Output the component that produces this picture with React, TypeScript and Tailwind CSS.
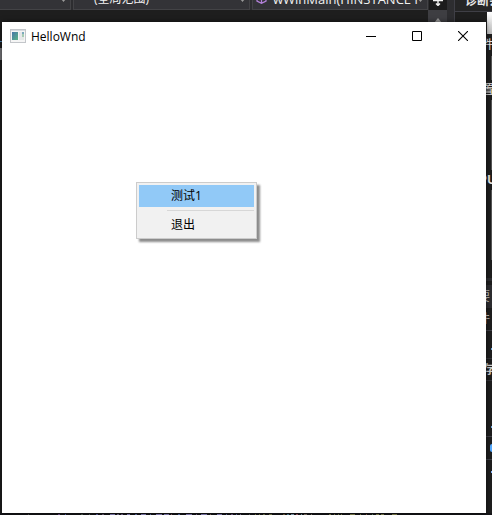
import React from "react";

const uiFont = "font-['Open_Sans','Noto_Sans_CJK_SC',sans-serif]";

// Tops of the code glyphs that peek out under the window: [gap before, width, colour]
const codeSpecks: [number, number, string][] = [
  [28, 1, "#4a4a4a"], [29, 2, "#6c4a86"], [5, 1, "#4a5aa8"], [15, 2, "#4b5a4b"],
  [6, 1, "#55605a"], [6, 2, "#5a5c9c"], [4, 2, "#6c5a72"], [6, 5, "#8c84bd"],
  [2, 2, "#77708f"], [2, 2, "#73618c"], [4, 3, "#8c84bd"], [5, 2, "#5a6aa0"],
  [4, 5, "#8c84bd"], [4, 1, "#5a6aa0"], [5, 6, "#8c84bd"], [2, 5, "#8c84bd"],
  [2, 1, "#8f5f65"], [6, 2, "#566aa4"], [6, 6, "#8c84bd"], [4, 1, "#765b89"],
  [4, 6, "#8c84bd"], [3, 1, "#795b55"], [6, 5, "#8c84bd"], [4, 1, "#5b6ba5"],
  [4, 2, "#765b89"], [3, 1, "#566aa4"], [3, 1, "#7a6f8f"], [8, 1, "#5a5a5a"],
  [5, 1, "#777a45"], [3, 1, "#777a45"], [3, 2, "#70764b"], [4, 3, "#7c7c4d"],
  [11, 2, "#77633f"], [2, 2, "#4f8296"], [2, 3, "#8daac0"], [2, 2, "#a45c67"],
  [3, 1, "#79a0b2"], [2, 3, "#83766a"], [4, 1, "#83766a"], [17, 2, "#7c7c4d"],
  [3, 1, "#7c7c4d"], [3, 1, "#6f7d4b"], [2, 1, "#7c7c4d"], [8, 5, "#858650"],
  [5, 1, "#7c7c4d"], [5, 1, "#8a5d45"], [5, 1, "#5c8660"], [3, 3, "#858650"],
  [2, 3, "#858650"], [8, 5, "#858650"],
];

function EditorBar() {
  const field = "flex h-[10px] items-end overflow-hidden border border-t-0 border-[#434346] bg-[#333337]";
  return (
    <header className="flex h-[10px] min-w-0 shrink-0 overflow-hidden bg-[#2d2d30] text-[12px] leading-5 text-[#f1f1f1]">
      <div className={`${field} w-[71px] shrink-0 justify-end border-l-0`}>
        <Caret />
      </div>
      <div className={`${field} ml-0.5 w-[177px] shrink-0 justify-between pl-5`}>
        <span>(全局范围)</span>
        <Caret />
      </div>
      <div className={`${field} ml-0.5 min-w-0 flex-1`}>
        <svg className="ml-[3px] mb-[5px] h-[11px] w-[11px] shrink-0" viewBox="0 0 11 11" fill="none" stroke="#b180d7" strokeWidth="1.3">
          <path d="M5.5 1 10 3v5l-4.500 2.300L1 8V3zM1 3l4.500 2.500L10 3M5.500 5.500v5" />
        </svg>
        <span className="ml-1.5 min-w-0 flex-1 overflow-hidden whitespace-nowrap text-[13px]">wWinMain(HINSTANCE hInstance)</span>
        <Caret />
      </div>
      <div className="ml-px flex w-[18px] shrink-0 items-end justify-center bg-[#1b1b1c]">
        <svg className="mb-1 h-3 w-3" viewBox="0 0 12 12" fill="none" stroke="#f1f1f1" strokeWidth="1.400">
          <path d="M1 6.500h10M6 0v11M4 9.500 6 11.500l2-2" />
        </svg>
      </div>
    </header>
  );
}

function Caret() {
  return (
    <svg className="mr-1 mb-[7px] h-[3px] w-[5px] shrink-0" viewBox="0 0 5 3" fill="#999999">
      <path d="M0 0h5L2.500 3z" />
    </svg>
  );
}

function DiagnosticsPanel() {
  return (
    <aside className="flex w-[37px] shrink-0 flex-col overflow-hidden bg-[#1e1e1e] text-[12px] font-semibold text-[#e8e8e8]">
      <div className="flex h-3 shrink-0 items-end overflow-hidden whitespace-nowrap border-b border-[#3f3f46] bg-[#252526] pl-2.5 leading-5">诊断会</div>
      <div className="ml-8 h-[22px] shrink-0 bg-linear-to-b from-white to-[#bcbcbc]" />
      <div className="flex h-[22px] shrink-0 items-center justify-end font-normal"><span className="-mr-0.5">件</span></div>
      <div className="ml-9 h-6 shrink-0 border-l border-[#555555]" />
      <div className="flex h-5 shrink-0 items-center justify-end font-normal"><span className="-mr-0.5">置</span></div>
      <div className="ml-9 h-[70px] shrink-0 border-l border-[#555555]" />
      <div className="flex h-5 shrink-0 items-center justify-end font-bold"><span className="-mr-1">PU</span></div>
      <div className="ml-9 h-[70px] shrink-0 border-l border-[#555555]" />
      <div className="mt-[18px] h-[3px] shrink-0 bg-[#2d2d30]" />
      <div className="mt-1 flex h-[23px] shrink-0 items-center justify-end bg-[#2d2d30] font-normal text-[#c8c8c8]"><span className="mr-0.5">要</span></div>
      <div className="flex h-[23px] shrink-0 items-center justify-end border-b border-[#3f3f46] font-normal text-[#c8c8c8]"><span className="mr-0.5">件</span></div>
      <div className="flex h-7 shrink-0 items-end justify-end border-b border-[#333337] pb-2">
        <span className="h-0.5 w-px bg-[#6fa8dc]" />
      </div>
      <div className="flex h-[22px] shrink-0 items-center justify-end border-b border-[#333337] text-[#d0d0d0]"><span className="-mr-0.5">存</span></div>
      <div className="flex h-[56px] shrink-0 items-end justify-end border-b border-[#3f3f46] pb-2">
        <span className="h-0.5 w-px bg-[#6fa8dc]" />
      </div>
      <div className="flex h-[23px] shrink-0 items-center justify-end border-b border-[#3f3f46]">
        <span className="h-2 w-0.5 rounded-l-full bg-[#55aaff]" />
      </div>
      <div className="flex h-6 shrink-0 items-center justify-end">
        <span className="h-0.5 w-px bg-[#88b7ff]" />
      </div>
    </aside>
  );
}

function AppIcon() {
  return (
    <svg className="h-3.5 w-4 shrink-0" viewBox="0 0 16 14" aria-hidden="true" shapeRendering="crispEdges">
      <defs>
        <linearGradient id="screen" x1="0" y1="0" x2="1" y2="1">
          <stop offset="0" stopColor="#4776a8" />
          <stop offset="1" stopColor="#5cb487" />
        </linearGradient>
      </defs>
      <path d="M0 0h16v14H0z" fill="#c3c6ca" />
      <path d="M1 1h14v1H1z" fill="#d8dbe0" />
      <path d="M1 2h14v11H1z" fill="#f5f5f5" />
      <path d="M2 3h6v8H2z" fill="url(#screen)" />
      <path d="M9 3h3v8H9z" fill="#e6e7e9" />
      <path d="M12 3h2v2h-2z" fill="#7ba9bd" />
      <path d="M12 5h2v3h-2z" fill="#a5cbb4" />
      <path d="M12 8h2v3h-2z" fill="#e3e8e5" />
    </svg>
  );
}

const captionButton = "flex h-7 w-[46px] items-center justify-center";

function HelloWindow() {
  return (
    <section className="absolute top-[22px] right-1.5 bottom-0.5 left-0.5 bg-white text-black shadow-[0_0_5px_rgba(0,0,0,0.6)]">
      <div className="flex h-7 items-center pl-2">
        <AppIcon />
        <h1 className="ml-[5px] flex-1 pt-0.5 text-[12px] leading-4">HelloWnd</h1>
        <button type="button" aria-label="最小化" className={captionButton}>
          <svg className="h-2.5 w-2.5" viewBox="0 0 10 10" shapeRendering="crispEdges"><path d="M0 5h10v1H0z" /></svg>
        </button>
        <button type="button" aria-label="最大化" className={captionButton}>
          <svg className="h-2.5 w-2.5" viewBox="0 0 10 10" fill="none" stroke="black"><path d="M.5.5h9v9h-9z" /></svg>
        </button>
        <button type="button" aria-label="关闭" className={captionButton}>
          <svg className="h-2.5 w-2.5" viewBox="0 0 10 10" fill="none" stroke="black" strokeWidth="1.100"><path d="m0 0 10 10M10 0 0 10" /></svg>
        </button>
      </div>
      <div role="menu" className="absolute top-[160px] left-[134px] flex w-[121px] flex-col border border-[#cccccc] bg-[#f1f1f1] p-0.5 text-[12px] leading-[22px] shadow-[3px_3px_2px_rgba(0,0,0,0.45)]">
        <button type="button" role="menuitem" className="h-[22px] bg-[#91c9f7] pl-8 text-left">测试1</button>
        <hr className="mt-[3px] mb-[3px] ml-7 border-[#d7d7d7]" />
        <button type="button" role="menuitem" className="h-[22px] pl-8 text-left">退出</button>
      </div>
    </section>
  );
}

export default function App() {
  return (
    <main className={`relative flex h-screen flex-col overflow-hidden bg-[#1a1a1c] ${uiFont}`}>
      <div className="flex min-h-0 flex-1">
        <div className="flex min-w-0 flex-1 flex-col">
          <EditorBar />
          <div className="flex flex-1 justify-between bg-[#1e1e1e]">
            <div className="flex w-0.5 flex-col pt-[31px]">
              <span className="h-px bg-[#4f86b8]" />
              <span className="mt-1.5 h-3 bg-[#77777a]" />
            </div>
            <div className="flex w-[19px] justify-center bg-[#3e3e42] pt-2">
              <svg className="h-[5px] w-2" viewBox="0 0 8 5" fill="#999999"><path d="M4 0 8 5H0z" /></svg>
            </div>
          </div>
        </div>
        <div className="w-2 shrink-0 border-r border-[#3f3f46] bg-[#2d2d30]" />
        <DiagnosticsPanel />
      </div>
      <div className="flex h-0.5 shrink-0 items-end overflow-hidden bg-[#151518]">
        {codeSpecks.map(([gap, width, color], i) => (
          <span key={i} className="h-px shrink-0" style={{ marginLeft: gap, width, backgroundColor: color }} />
        ))}
      </div>
      <HelloWindow />
    </main>
  );
}
